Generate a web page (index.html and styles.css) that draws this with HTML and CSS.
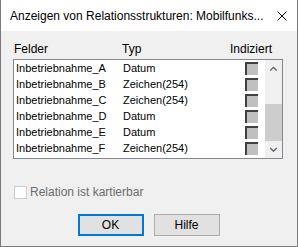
FILE: index.html
```html
<!DOCTYPE html>
<html lang="de">
<head>
    <meta charset="UTF-8">
    <title>Anzeigen von Relationsstrukturen</title>
    <link rel="stylesheet" href="styles.css">
</head>
<body>
<div class="window">
    <div class="titlebar">
        <span class="title">Anzeigen von Relationsstrukturen: Mobilfunks...</span>
        <svg class="close" width="10" height="10" viewBox="0 0 10 10">
            <path d="M0.5 0.5 L9.5 9.5 M9.5 0.5 L0.5 9.5" stroke="#000" stroke-width="1"/>
        </svg>
    </div>
    <div class="content">
        <div class="heads">
            <span class="h-feld">Felder</span>
            <span class="h-typ">Typ</span>
            <span class="h-idx">Indiziert</span>
        </div>
        <div class="list">
            <div class="rows">
                <div class="row"><span class="feld">Inbetriebnahme_A</span><span class="typ">Datum</span><span class="cb"></span></div>
                <div class="row"><span class="feld">Inbetriebnahme_B</span><span class="typ">Zeichen(254)</span><span class="cb"></span></div>
                <div class="row"><span class="feld">Inbetriebnahme_C</span><span class="typ">Zeichen(254)</span><span class="cb"></span></div>
                <div class="row"><span class="feld">Inbetriebnahme_D</span><span class="typ">Datum</span><span class="cb"></span></div>
                <div class="row"><span class="feld">Inbetriebnahme_E</span><span class="typ">Datum</span><span class="cb"></span></div>
                <div class="row"><span class="feld">Inbetriebnahme_F</span><span class="typ">Zeichen(254)</span><span class="cb"></span></div>
            </div>
            <div class="scrollbar">
                <svg class="arrow" width="9" height="6" viewBox="0 0 9 6">
                    <path d="M1 5 L4.5 1.5 L8 5" fill="none" stroke="#606060" stroke-width="1.5"/>
                </svg>
                <div class="track"><div class="thumb"></div></div>
                <svg class="arrow" width="9" height="6" viewBox="0 0 9 6">
                    <path d="M1 1 L4.5 4.5 L8 1" fill="none" stroke="#606060" stroke-width="1.5"/>
                </svg>
            </div>
        </div>
        <label class="check">
            <span class="box"></span>
            <span>Relation ist kartierbar</span>
        </label>
        <div class="buttons">
            <button class="btn default">OK</button>
            <button class="btn">Hilfe</button>
        </div>
    </div>
</div>
</body>
</html>
```

FILE: styles.css
```css
body{
    margin: 0;
    font-family: "Liberation Sans", Arial, sans-serif;
}
.window{
    width: 298px;
    height: 247px;
    box-sizing: border-box;
    border: 1px solid #7a7a7a;
    border-top: none;
    display: flex;
    flex-direction: column;
    background: #f0f0f0;
}
.titlebar{
    height: 31px;
    background: #fff;
    display: flex;
    align-items: center;
    padding: 0 9px 0 9px;
    font-size: 12px;
    color: #000;
}
.title{
    flex: 1;
    white-space: nowrap;
    overflow: hidden;
}
.close{
    margin-right: 1px;
}
.content{
    flex: 1;
    padding: 10px 13px 0 12px;
}
.heads{
    display: flex;
    height: 18px;
    font-size: 12px;
    line-height: 16px;
}
.h-feld{
    width: 108px;
    padding-left: 1px;
}
.h-typ{
    width: 108px;
}
.list{
    display: flex;
    width: 270px;
    height: 100px;
    box-sizing: border-box;
    border: 1px solid #828790;
    background: #fff;
}
.rows{
    flex: 1;
}
.row{
    display: flex;
    align-items: center;
    height: 16px;
    font-size: 11px;
}
.feld{
    width: 107px;
    padding-left: 2px;
}
.typ{
    width: 122px;
}
.cb{
    width: 11px;
    height: 11px;
    border-top: 2px solid #404040;
    border-left: 2px solid #404040;
    background: #c0c0c0;
    margin-top: 1px;
}
.scrollbar{
    width: 17px;
    display: flex;
    flex-direction: column;
    align-items: center;
    background: #f0f0f0;
}
.arrow{
    margin: 6px 0;
}
.track{
    flex: 1;
    width: 100%;
    position: relative;
}
.thumb{
    margin-top: 26px;
    height: 37px;
    background: #cdcdcd;
}
.check{
    display: flex;
    align-items: center;
    margin-top: 26px;
    font-size: 12px;
    color: #6d6d6d;
}
.box{
    width: 11px;
    height: 11px;
    border: 1px solid #cccccc;
    background: #fff;
    margin-right: 3px;
    margin-left: 1px;
}
.buttons{
    display: flex;
    justify-content: center;
    gap: 10px;
    margin-top: 15px;
    padding-right: 0;
}
.btn{
    width: 66px;
    height: 22px;
    box-sizing: border-box;
    border: 1px solid #adadad;
    background: #e1e1e1;
    font-family: "Liberation Sans", Arial, sans-serif;
    font-size: 12px;
    color: #000;
    padding: 0;
}
.btn.default{
    border: 2px solid #0078d7;
}
```
